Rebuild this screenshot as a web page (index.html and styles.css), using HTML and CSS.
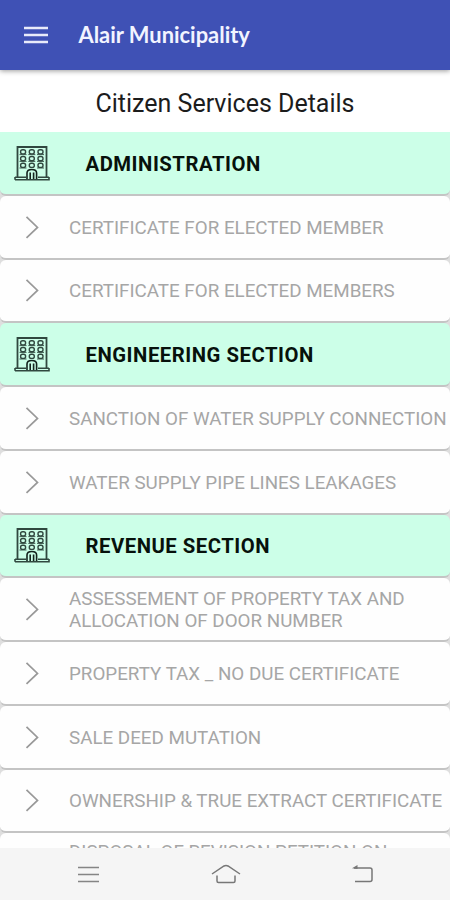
FILE: index.html
```html
<!DOCTYPE html>
<html lang="en">
<head>
<meta charset="utf-8">
<title>Alair Municipality</title>
<link rel="stylesheet" href="styles.css">
</head>
<body>
<svg width="0" height="0" class="defs">
  <symbol id="chevron" viewBox="0 0 14 24"><path d="M1.5 1.9 L12.5 12.4 L1.5 22.9" fill="none" stroke="#999" stroke-width="1.7"/></symbol>
  <symbol id="building" viewBox="0 0 36 36">
    <g fill="none" stroke="#30483f" stroke-width="1.4">
      <path d="M3.5 32V2H32.5V32" stroke-width="1.8"/>
      <path d="M1 32.3H12M24 32.3H35M1 34.7H35V32M1 34.7V32" stroke-width="1.6"/>
      <g>
        <rect x="6.6" y="4.7" width="5" height="4.2" rx="2"/><rect x="15.3" y="4.7" width="5" height="4.2" rx="2"/><rect x="24" y="4.7" width="5" height="4.2" rx="2"/>
        <rect x="6.6" y="11.5" width="5" height="4.2" rx="2"/><rect x="15.3" y="11.5" width="5" height="4.2" rx="2"/><rect x="24" y="11.5" width="5" height="4.2" rx="2"/>
        <rect x="6.6" y="18.2" width="5" height="4.2" rx="2"/><rect x="15.3" y="18.2" width="5" height="4.2" rx="2"/><rect x="24" y="18.2" width="5" height="4.2" rx="2"/>
      </g>
      <path d="M5.5 9.6H12.5M14.3 9.6H21.3M23 9.6H30M5.5 16.4H12.5M14.3 16.4H21.3M23 16.4H30M5.5 23H12.5M23 23H30" stroke-width=".9"/>
      <path d="M13 34V28Q13 24.5 17.8 24.5T22.6 28V34M16.2 34V27.5M19.6 34V27.5" stroke="#14231d" stroke-width="1.6"/>
    </g>
  </symbol>
</svg>
<header class="appbar">
  <svg class="menu" width="24" height="18" viewBox="0 0 24 18"><path d="M0 2.1H24M0 9H24M0 15.9H24" stroke="#e9ebfa" stroke-width="2.5"/></svg>
  <span class="title">Alair Municipality</span>
</header>
<h1 class="heading"><span>Citizen Services Details</span></h1>
<main class="list">
  <div class="row section first"><svg class="building"><use href="#building"/></svg><span>ADMINISTRATION</span></div>
  <div class="row"><svg class="chevron"><use href="#chevron"/></svg><span>CERTIFICATE FOR ELECTED MEMBER</span></div>
  <div class="row"><svg class="chevron"><use href="#chevron"/></svg><span>CERTIFICATE FOR ELECTED MEMBERS</span></div>
  <div class="row section"><svg class="building"><use href="#building"/></svg><span>ENGINEERING SECTION</span></div>
  <div class="row"><svg class="chevron"><use href="#chevron"/></svg><span>SANCTION OF WATER SUPPLY CONNECTION</span></div>
  <div class="row"><svg class="chevron"><use href="#chevron"/></svg><span>WATER SUPPLY PIPE LINES LEAKAGES</span></div>
  <div class="row section"><svg class="building"><use href="#building"/></svg><span>REVENUE SECTION</span></div>
  <div class="row"><svg class="chevron"><use href="#chevron"/></svg><span>ASSESSEMENT OF PROPERTY TAX AND<br>ALLOCATION OF DOOR NUMBER</span></div>
  <div class="row"><svg class="chevron"><use href="#chevron"/></svg><span>PROPERTY TAX _ NO DUE CERTIFICATE</span></div>
  <div class="row"><svg class="chevron"><use href="#chevron"/></svg><span>SALE DEED MUTATION</span></div>
  <div class="row"><svg class="chevron"><use href="#chevron"/></svg><span>OWNERSHIP &amp; TRUE EXTRACT CERTIFICATE</span></div>
  <div class="row partial"><span>DISPOSAL OF REVISION PETITION ON</span></div>
</main>
<nav class="navbar">
  <svg width="22" height="18" viewBox="0 0 22 18"><path d="M0 2.5H21M0 9.5H21M0 16.5H21" stroke="#858585" stroke-width="1.7"/></svg>
  <svg width="30" height="22" viewBox="0 0 30 22"><path d="M1 11L13 3Q15 2 17 3L29 11M6 12.5V18Q6 19.5 7.5 19.5H22.5Q24 19.5 24 18V12.5" fill="none" stroke="#777" stroke-width="1.5"/></svg>
  <svg width="22" height="20" viewBox="0 0 22 20"><path d="M2 4H18Q20 4 20 6V15.500Q20 17.500 18 17.500H3" fill="none" stroke="#777" stroke-width="1.5"/><path d="M0 4.2L5.5 1V5Z" fill="#777"/></svg>
</nav>
</body>
</html>
```
FILE: styles.css
```css
* { box-sizing: border-box; }
body {
  margin: 0;
  width: 450px;
  height: 900px;
  overflow: hidden;
  display: flex;
  flex-direction: column;
  background: #fff;
  font-family: Roboto, sans-serif;
}
.defs { display: none; }
.appbar {
  flex: none;
  height: 70px;
  display: flex;
  align-items: center;
  padding-left: 23.5px;
  background: #3f51b5;
  box-shadow: 0 1px 5px rgba(0, 0, 0, .4);
}
.title {
  margin: 0 0 2px 31px;
  font: 700 21.9px Lato, sans-serif;
  color: #f2f4ff;
}
.heading {
  flex: none;
  height: 62px;
  margin: 0;
  padding-top: 5px;
  display: flex;
  align-items: center;
  justify-content: center;
  font-weight: 400;
  font-size: 25px;
  color: #1c1c1c;
}
.list {
  flex: 1;
  min-height: 0;
  overflow: hidden;
  background: #dedede;
}
.row {
  height: 63.75px;
  display: flex;
  align-items: center;
  padding-left: 25px;
  border-bottom: 2px solid #c4c4c4;
  border-radius: 6px;
  background: #fefefe;
  font-size: 18.8px;
  line-height: 21.8px;
  color: #a6a6a6;
  white-space: nowrap;
}
.row span { padding-top: 4px; }
.section {
  padding-left: 14px;
  background: #ccffe8;
  font-size: 20.3px;
  font-weight: 700;
  letter-spacing: .52px;
  color: #07110c;
}
.first { border-radius: 0 0 6px 6px; }
.chevron { width: 14px; height: 24px; margin-right: 30px; flex: none; }
.building { width: 36px; height: 36px; margin-right: 35.5px; flex: none; }
.row.partial { align-items: flex-start; padding: 5px 0 0 69px; }
.navbar {
  flex: none;
  height: 52px;
  display: flex;
  align-items: center;
  justify-content: space-between;
  padding: 0 76px 0 78px;
  background: #f5f5f5;
}
```
